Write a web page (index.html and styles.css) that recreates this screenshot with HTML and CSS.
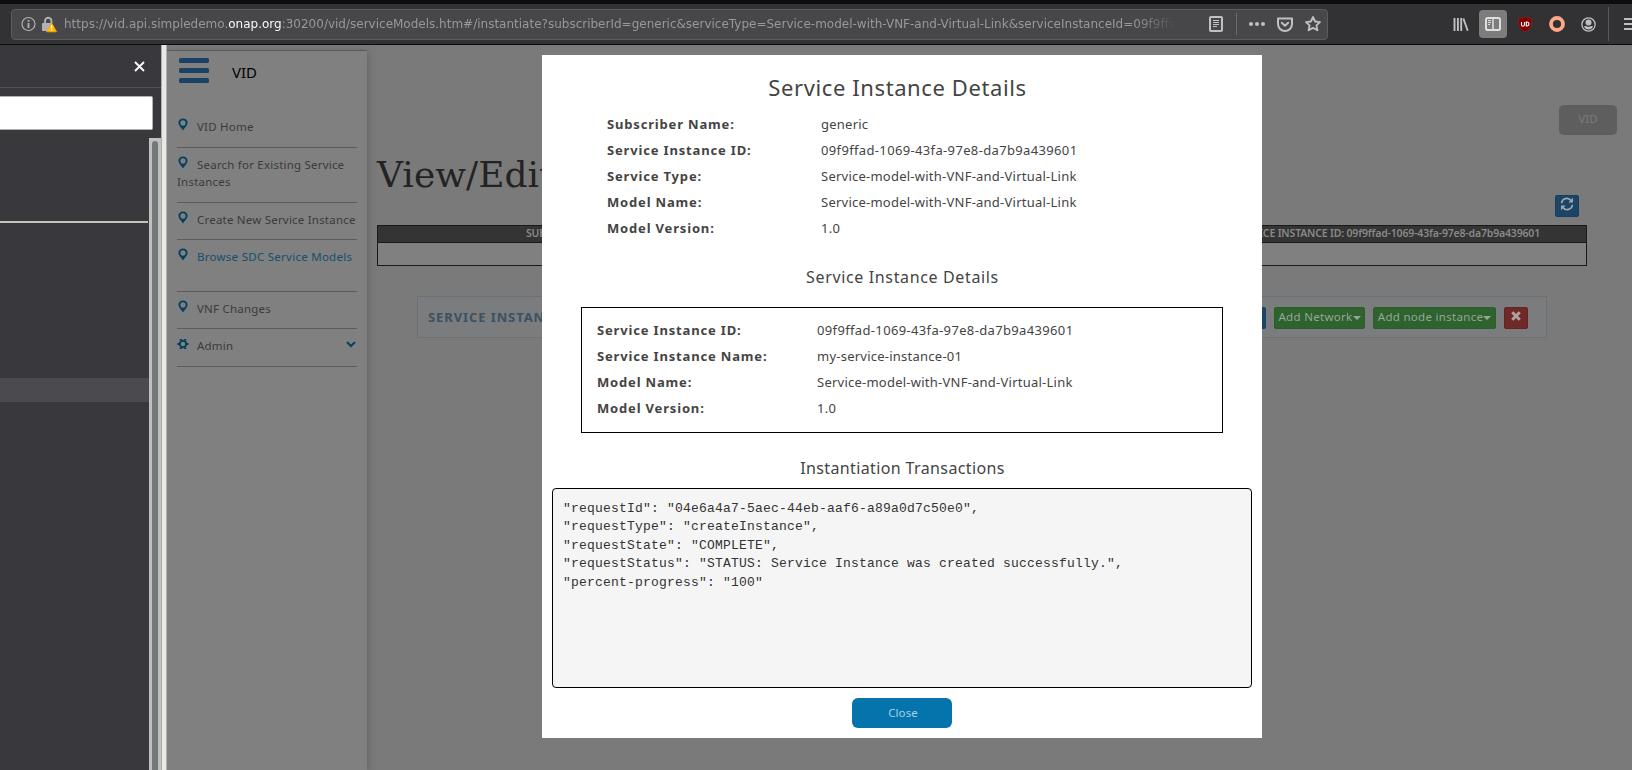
FILE: index.html
```html
<!DOCTYPE html>
<html lang="en">
<head>
<meta charset="utf-8">
<title>VID</title>
<link rel="stylesheet" href="styles.css">
</head>
<body>
<svg class="defs" width="0" height="0">
  <symbol id="pin" viewBox="0 0 10 13"><path fill-rule="evenodd" d="M5 0.5C2.3 0.5.4 2.4.4 4.8.4 7.600 3.400 9.800 5 12.500 6.600 9.800 9.600 7.600 9.600 4.800 9.600 2.400 7.700.500 5 .500zM5 2.300a2.600 2.700 0 1 1 0 5.400 2.600 2.700 0 0 1 0-5.400z"/></symbol>
</svg>
<header class="toolbar">
  <div class="urlbar">
    <svg class="info" width="15" height="16" viewBox="0 0 15 16" fill="none" stroke="#b1b1b3"><circle cx="7.500" cy="8" r="6.500" stroke-width="1.200"/><path d="M7.500 7v5M7.500 4v1.700" stroke-width="1.800"/></svg>
    <svg class="lock" width="15" height="17" viewBox="0 0 15 17"><path d="M3 8V5a3.200 3.200 0 0 1 6.400 0v2" fill="none" stroke="#b1b1b3" stroke-width="1.900"/><rect x="0" y="7" width="10" height="8" rx="1" fill="#b1b1b3"/><path d="M9.600 6.800l4.900 9H4.700z" fill="#ffbf00" stroke="#ffa800" stroke-width=".8"/><path d="M9.600 9.300v3.200M9.600 13.500v1.300" stroke="#fff" stroke-width="1.200"/></svg>
    <div class="url">https://vid.api.simpledemo.<span class="domain">onap.org</span>:30200/vid/serviceModels.htm#/instantiate?subscriberId=generic&amp;serviceType=Service-model-with-VNF-and-Virtual-Link&amp;serviceInstanceId=09f9ffa</div>
    <svg class="reader" width="14" height="16" viewBox="0 0 14 16" fill="none" stroke="#c0c0c2"><rect x="1" y="1" width="12" height="14" rx="1" stroke-width="2"/><path d="M4 4.500h6M4 6.500h6M4 8.500h6M4 10.500h4" stroke-width="1"/></svg>
    <i class="urlsep"></i>
    <svg class="dots" width="16" height="6" viewBox="0 0 16 6" fill="#c0c0c2"><circle cx="2" cy="3" r="2"/><circle cx="8" cy="3" r="2"/><circle cx="14" cy="3" r="2"/></svg>
    <svg class="pocket" width="16" height="15" viewBox="0 0 16 15" fill="none" stroke="#c0c0c2" stroke-width="2" stroke-linejoin="round" stroke-linecap="round"><path d="M1 1.500h14V7a7 7 0 0 1-14 0z"/><path d="M4.800 5.700L8 8.700l3.200-3"/></svg>
    <svg width="16" height="16" viewBox="0 0 16 16" fill="none" stroke="#c0c0c2" stroke-width="1.800" stroke-linejoin="round"><path d="M8 1l2.100 4.500 4.900.6-3.600 3.300 1 4.900L8 11.900l-4.400 2.400 1-4.900L1 6.100l4.900-.6z"/></svg>
  </div>
  <div class="tools">
    <svg width="16" height="15" viewBox="0 0 16 15" stroke="#c0c0c2" stroke-width="1.900"><path d="M1.500 1v13M4.900 1v13M8.200 1v13M10.400 1.500l4.300 12.300"/></svg>
    <span class="active"><svg width="16" height="14" viewBox="0 0 16 14" fill="none" stroke="#dededf"><rect x="1" y="1" width="14" height="12" rx="1.800" stroke-width="2"/><path d="M8 1v12" stroke-width="1.500"/><path d="M3 3.500h3M3 5.500h3M3 7.500h2" stroke-width="1"/></svg></span>
    <svg width="16" height="17" viewBox="0 0 16 17"><path d="M8 .8c2 1.200 4 1.600 6.500 1.600 0 6-.4 10.600-6.500 13.600C1.900 13 1.500 8.400 1.500 2.400 4 2.400 6 2 8 .8z" fill="#800000" stroke="#9c2020" stroke-width=".6"/><path d="M4.500 6v3q.2 1.200 1.500 1.200t1.500-1.200V6M9.300 6v4h.8q1.900-.2 1.900-2t-1.900-2z" fill="none" stroke="#fff" stroke-width="1.100"/></svg>
    <svg width="16" height="16" viewBox="0 0 16 16"><circle cx="8" cy="8" r="6" fill="none" stroke="#ffa988" stroke-width="3.800"/></svg>
    <svg width="15" height="15" viewBox="0 0 15 15"><circle cx="7.500" cy="7.500" r="6.600" fill="none" stroke="#c0c0c2" stroke-width="1.300"/><circle cx="7.500" cy="5.600" r="3" fill="#c0c0c2"/><path d="M3 9.300q1.800-.6 2.500 0 2 1 4 0 .7-.6 2.500 0-1.200 3.200-4.500 3.200T3 9.300z" fill="#c0c0c2"/></svg>
    <i class="toolsep"></i>
    <svg class="menuicon" width="14" height="14" viewBox="0 0 14 14" stroke="#c0c0c2" stroke-width="2"><path d="M0 2h14M0 7h14M0 12h14"/></svg>
  </div>
</header>
<div class="workspace">
  <aside class="panel">
    <div class="panelhead"><svg width="11" height="11" viewBox="0 0 11 11" stroke="#f9f9fa" stroke-width="1.900"><path d="M1 1l9 9M10 1l-9 9"/></svg></div>
    <div class="search"></div>
    <div class="tree"><div class="list"><div class="rule"></div><div class="picked"></div></div><div class="scroll"><div class="thumb"></div></div></div>
  </aside>
  <div class="splitter"></div>
  <main class="page">
    <nav class="menu">
      <div class="brand"><div class="burger"><i></i><i></i><i></i></div><span>VID</span></div>
      <a class="item home"><svg><use href="#pin"/></svg>VID Home</a>
      <a class="item tall"><svg><use href="#pin"/></svg>Search for Existing Service<br>Instances</a>
      <a class="item"><svg><use href="#pin"/></svg>Create New Service Instance</a>
      <a class="item browse"><svg><use href="#pin"/></svg>Browse SDC Service Models</a>
      <a class="item"><svg><use href="#pin"/></svg>VNF Changes</a>
      <a class="item admin"><svg class="gear" viewBox="0 0 12 12"><circle cx="6" cy="6" r="3.200" fill="none" stroke="#05415f" stroke-width="2"/><path d="M3.800 1v1.500M8.200 1v1.500M3.800 9.500V11M8.200 9.500V11M.4 6h2M9.600 6h2" stroke="#05415f" stroke-width="2.200"/></svg>Admin<svg class="chev" viewBox="0 0 10 7"><path d="M1 1l4 4 4-4" fill="none" stroke="#05415f" stroke-width="2"/></svg></a>
    </nav>
    <section class="content">
      <div class="vidbtn">VID</div>
      <h1>View/Edit</h1>
      <div class="refresh"><svg width="14" height="14" viewBox="0 0 14 14" fill="none" stroke="#a0a9b1" stroke-width="1.700"><path d="M1.600 6.200A5.200 5.200 0 0 1 11 3.600M12.400 7.800A5.200 5.200 0 0 1 3 10.400"/><path d="M13 .8v4.600H8.400zM1 13.200V8.600h4.600z" fill="#a0a9b1" stroke="none"/></svg></div>
      <div class="table"><div class="thead"><span>SUBSCRIBER</span><span class="sid">SERVICE INSTANCE ID: 09f9ffad-1069-43fa-97e8-da7b9a439601</span></div><div class="trow"></div></div>
      <div class="instance"><b>SERVICE INSTANCE</b><div class="btns"><span class="btn blue"></span><span class="btn net">Add Network<i></i></span><span class="btn node">Add node instance<i></i></span><span class="btn red"><svg viewBox="0 0 12 12" stroke="#b2a09f" stroke-width="3.600"><path d="M1.500 1.500l9 9M10.500 1.500l-9 9"/></svg></span></div></div>
    </section>
    <div class="modal">
      <h2>Service Instance Details</h2>
      <dl class="details">
        <dt>Subscriber Name:</dt><dd>generic</dd>
        <dt>Service Instance ID:</dt><dd class="uuid">09f9ffad-1069-43fa-97e8-da7b9a439601</dd>
        <dt>Service Type:</dt><dd>Service-model-with-VNF-and-Virtual-Link</dd>
        <dt>Model Name:</dt><dd>Service-model-with-VNF-and-Virtual-Link</dd>
        <dt>Model Version:</dt><dd>1.0</dd>
      </dl>
      <h3>Service Instance Details</h3>
      <dl class="details boxed">
        <dt>Service Instance ID:</dt><dd class="uuid">09f9ffad-1069-43fa-97e8-da7b9a439601</dd>
        <dt>Service Instance Name:</dt><dd>my-service-instance-01</dd>
        <dt>Model Name:</dt><dd>Service-model-with-VNF-and-Virtual-Link</dd>
        <dt>Model Version:</dt><dd>1.0</dd>
      </dl>
      <h3 class="trans">Instantiation Transactions</h3>
<pre>"requestId": "04e6a4a7-5aec-44eb-aaf6-a89a0d7c50e0",
"requestType": "createInstance",
"requestState": "COMPLETE",
"requestStatus": "STATUS: Service Instance was created successfully.",
"percent-progress": "100"</pre>
      <button class="close">Close</button>
    </div>
  </main>
</div>
</body>
</html>
```
FILE: styles.css
```css
* { box-sizing: border-box; }
body { margin: 0; height: 770px; overflow: hidden; display: flex; flex-direction: column; font-family: "Noto Sans", sans-serif; }
.defs { display: none; }
svg { flex: none; }

.toolbar { height: 45px; flex: none; display: flex; align-items: center; background: #323234; border-top: 4px solid #0c0c0d; border-bottom: 1px solid #0c0c0d; padding-left: 11px; }
.urlbar { width: 1317px; height: 31px; flex: none; display: flex; align-items: center; background: #474749; border: 1px solid #5c5c5f; border-radius: 4px; padding-left: 9px; }
.lock { margin-left: 6px; }
.url { margin-left: 7px; width: 1115px; margin-right: 30px; overflow: hidden; white-space: nowrap; font: 12px/20px "DejaVu Sans", sans-serif; color: #98989a; mask-image: linear-gradient(90deg, #000 1070px, transparent 1112px); }
.domain { color: #f9f9fa; }
.urlsep { width: 1px; height: 22px; margin: 0 12px 0 13px; background: #666c75; }
.pocket { margin: 0 12px; }
.tools { display: flex; align-items: center; margin-left: 125px; flex: none; }
.active { width: 28px; height: 28px; margin: 0 10px; border-radius: 4px; background: #7d7d7e; display: flex; align-items: center; justify-content: center; }
.tools > svg + svg { margin-left: 16px; }
.toolsep { width: 1px; height: 34px; background: #5a5a5c; margin: 0 15px 0 12px; }

.workspace { flex: 1; display: flex; min-height: 0; }
.panel { width: 161px; background: #38383d; flex: none; display: flex; flex-direction: column; }
.panelhead { height: 43px; border-bottom: 1px solid #505055; display: flex; align-items: center; justify-content: flex-end; padding: 0 16px 0 0; flex: none; }
.search { width: 153px; height: 34px; margin: 8px 0; background: #fff; border: 1px solid #b0b0ac; border-left: 0; border-radius: 0 2px 2px 0; flex: none; }
.tree { flex: 1; display: flex; }
.list { width: 149px; padding-top: 83px; }
.rule { height: 2px; width: 148px; background: #c4c4bf; }
.picked { height: 24px; margin-top: 155px; background: #4a4a4f; }
.scroll { width: 12px; background: #bfc1c0; padding: 3px 3px 0; display: flex; }
.thumb { width: 6px; background: #747877; border-radius: 3px 3px 0 0; }
.splitter { width: 6px; flex: none; background: #e8e8e5; border-left: 1px solid #acaeac; border-right: 1px solid #b0b0ae; }

.page { flex: 1; position: relative; display: flex; background: #7a7a7a; overflow: hidden; }
.menu { width: 200px; flex: none; margin-top: 5px; background: #808080; border-top: 1px solid #5a5a5a; box-shadow: 1px 2px 7px #626262; padding: 0 10px; }
.brand { height: 59px; display: flex; font-size: 15px; color: #000; padding: 7px 0 0 2px; }
.burger { display: flex; flex-direction: column; gap: 5px; width: 30px; margin-right: 23px; }
.burger i { height: 5px; background: #1b4265; border-radius: 1.500px; }
.brand span { line-height: 28px; }
.item { display: block; height: 37px; padding: 8px 0 0; border-bottom: 1px solid #5c5c5c; color: #3b3b3b; font-size: 11.500px; line-height: 17px; letter-spacing: .21px; white-space: nowrap; }
.item svg { width: 10px; height: 13px; margin: -2px 9px 0 1px; vertical-align: 0; fill: #05415f; }
.item.home { height: 38px; }
.item.tall { height: 55px; }
.item.browse { height: 52px; color: #144f6f; letter-spacing: .27px; }
.item.admin { height: 38px; position: relative; }
.item svg.gear { width: 12px; margin: 0 8px 0 0; height: 12px; }
.item svg.chev { position: absolute; right: 1px; top: 12px; width: 10px; height: 7px; margin: 0; }

.content { flex: 1; display: flex; flex-direction: column; padding-left: 10px; }
.vidbtn { align-self: flex-end; width: 58px; height: 30px; margin: 60px 15px 0 0; background: #5e5e5e; border-radius: 5px; color: #777; text-align: center; font-size: 11.500px; line-height: 28px; font-weight: 500; }
h1 { height: 42px; margin: 19px 0 0; font: 36px/42px "DejaVu Serif", serif; color: #232323; white-space: nowrap; }
.refresh { align-self: flex-end; width: 24px; height: 22px; margin: -1px 53px 8px 0; background: #1b4467; border: 1px solid #17405f; border-radius: 2px; padding: 1px 4px; display: flex; }
.table { width: 1210px; height: 41px; flex: none; border: 1px solid #1a1a1a; background: #808080; }
.thead { height: 17px; background: #343434; border-bottom: 1px solid #1a1a1a; color: #898989; display: flex; justify-content: space-between; padding: 0 46px 0 148px; font-weight: 600; font-size: 10.500px; line-height: 15px; letter-spacing: -.17px; white-space: nowrap; }
.instance { width: 1130px; height: 42px; flex: none; margin: 30px 0 0 40px; border: 1px solid #6c7077; background: #7a7c7e; display: flex; align-items: center; justify-content: space-between; padding: 0 18px 0 10px; }
.instance b { font-size: 13px; letter-spacing: .9px; color: #3c5161; margin-top: -1px; }
.btns { display: flex; gap: 8px; margin-top: 1px; }
.btn { height: 22px; border-radius: 2px; font-size: 11.500px; line-height: 18px; letter-spacing: .3px; color: #97a797; white-space: nowrap; display: flex; align-items: center; justify-content: center; padding-bottom: 2px; }
.btn i { border: 4px solid transparent; border-top-color: #97a797; border-bottom: 0; margin-top: 2px; }
.blue { width: 24px; background: #1b4467; }
.net { width: 91px; background: #2e622e; border: 1px solid #286028; }
.node { width: 123px; background: #2e622e; border: 1px solid #286028; }
.red { width: 24px; background: #6d2a28; border: 1px solid #6a2220; }
.red svg { width: 10px; height: 10px; margin-bottom: 2px; }

.modal { position: absolute; left: 375px; top: 10px; width: 720px; height: 683px; background: #fff; color: #444; padding: 0 10px; }
h2, h3 { margin: 0; font-weight: 400; text-align: center; }
h2 { font-size: 22px; line-height: 30px; letter-spacing: .6px; padding: 17px 9px 0 0; }
.details { margin: 9px 0 0 55px; display: grid; grid-template-columns: 214px 1fr; grid-auto-rows: 26px; line-height: 26px; font-size: 13px; }
.details dt { font-weight: 700; letter-spacing: .83px; }
.details dd { margin: 0; white-space: nowrap; letter-spacing: .24px; }
.details .uuid { letter-spacing: .35px; }
h3 { font-size: 16px; line-height: 22px; letter-spacing: .64px; margin-top: 25px; padding-left: 1px; }
.details.boxed { width: 642px; height: 126px; margin: 19px 0 0 29px; border: 1px solid #000; padding: 9px 15px; grid-template-columns: 220px 1fr; }
.trans { margin-top: 24px; letter-spacing: .38px; }
pre { margin: 9px 0 10px; height: 200px; border: 1px solid #000; border-radius: 4px; background: #f5f5f5; color: #333; padding: 10.600px 10px 0; font: 13px/18.570px "Liberation Mono", monospace; letter-spacing: .2px; }
.close { display: block; margin: 0 auto; width: 100px; height: 30px; border: 0; border-radius: 6px; background: #0574ac; color: #a8d0e5; font: 11.500px "Noto Sans", sans-serif; letter-spacing: .1px; padding: 0 0 2px 2px; }
```
